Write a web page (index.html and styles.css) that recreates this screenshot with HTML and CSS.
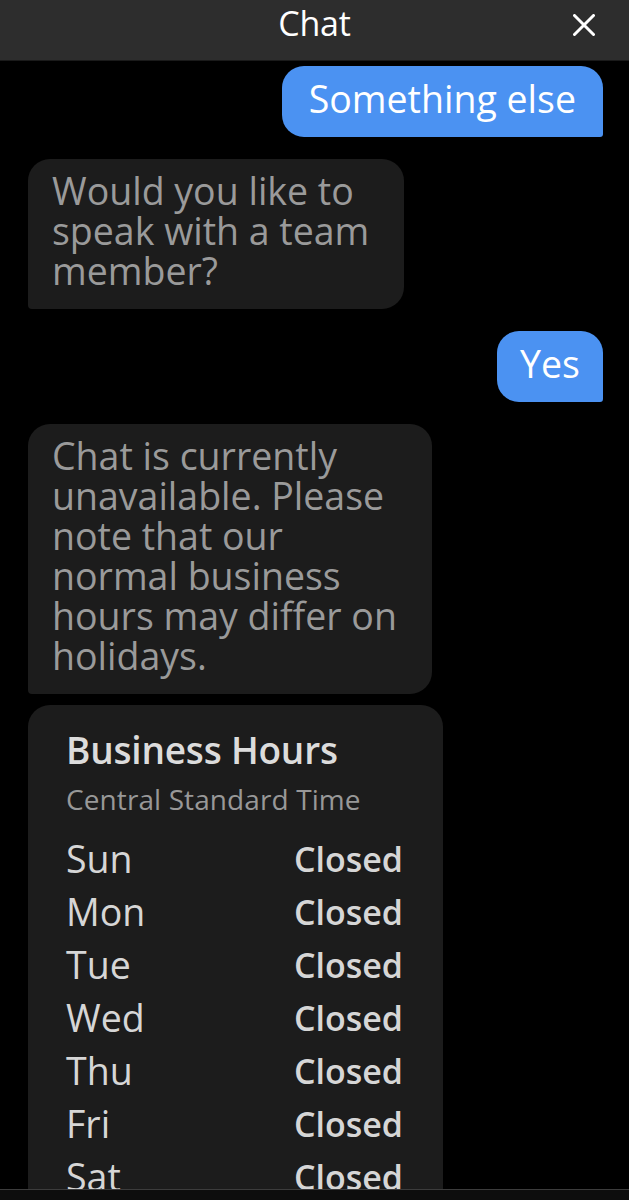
FILE: index.html
```html
<!DOCTYPE html>
<html>
<head>
<meta charset="utf-8">
<link rel="stylesheet" href="styles.css">
</head>
<body>
<div class="app">
  <header class="header">
    <div class="title">Chat</div>
    <button class="close" aria-label="Close">
      <svg width="22" height="22" viewBox="0 0 22 22"><path d="M1.5 1.5 L20.5 20.5 M20.5 1.5 L1.5 20.5" stroke="#fff" stroke-width="3" stroke-linecap="round" fill="none"/></svg>
    </button>
  </header>
  <main class="messages">
    <div class="msg user">Something else</div>
    <div class="msg bot">Would you like to<br>speak with a team<br>member?</div>
    <div class="msg user short">Yes</div>
    <div class="msg bot">Chat is currently<br>unavailable. Please<br>note that our<br>normal business<br>hours may differ on<br>holidays.</div>
    <div class="card">
      <div class="card-title">Business Hours</div>
      <div class="card-sub">Central Standard Time</div>
      <div class="hours">
        <div class="row"><span class="day">Sun</span><span class="status">Closed</span></div>
        <div class="row"><span class="day">Mon</span><span class="status">Closed</span></div>
        <div class="row"><span class="day">Tue</span><span class="status">Closed</span></div>
        <div class="row"><span class="day">Wed</span><span class="status">Closed</span></div>
        <div class="row"><span class="day">Thu</span><span class="status">Closed</span></div>
        <div class="row"><span class="day">Fri</span><span class="status">Closed</span></div>
        <div class="row"><span class="day">Sat</span><span class="status">Closed</span></div>
      </div>
    </div>
  </main>
  <footer class="footer"></footer>
</div>
</body>
</html>
```
FILE: styles.css
```css
* { box-sizing: border-box; }
html, body { margin: 0; padding: 0; background: #000; }
body { font-family: "Open Sans", "Noto Sans", sans-serif; }
.app { width: 629px; height: 1200px; display: flex; flex-direction: column; overflow: hidden; }
.header {
  height: 61px; flex: none; background: #2d2d2d; border-bottom: 1px solid #1a1a1a;
  display: flex; align-items: center; justify-content: center; position: relative;
}
.title { color: #fff; font-size: 34px; line-height: 40px; margin-top: -14px; letter-spacing: -0.2px; }
.close {
  position: absolute; right: 34px; top: 14px; width: 22px; height: 22px;
  background: none; border: 0; padding: 0; display: block;
}
.close svg { display: block; }
.messages {
  flex: 1; overflow: hidden; display: flex; flex-direction: column;
  padding: 5px 26px 0 28px; gap: 22px;
}
.msg { font-size: 37.5px; line-height: 40px; padding: 12px 26px 18px; width: fit-content; white-space: nowrap; }
.user {
  align-self: flex-end; background: #4b92f2; color: #fff;
  border-radius: 22px 22px 3px 22px; padding: 12.5px 27px 18.5px;
}
.user.short { padding-left: 23px; padding-right: 23px; }
.bot {
  align-self: flex-start; background: #1c1c1c; color: #9a9a9a;
  border-radius: 22px 22px 22px 4px; padding-left: 24px; padding-right: 35px;
}
.card {
  margin-top: -11px; width: 415px; flex: none; background: #1c1c1c;
  border-radius: 22px 22px 0 0; padding: 22px 40px 0 38px;
}
.card-title { color: #dcdcdc; font-weight: 600; font-size: 37px; line-height: 46px; letter-spacing: -0.2px; }
.card-sub { color: #989898; font-size: 28px; line-height: 34px; margin-top: 9px; letter-spacing: 0.1px; }
.hours { margin-top: 16px; display: flex; flex-direction: column; }
.row { display: flex; justify-content: space-between; height: 53px; align-items: center; color: #d6d6d6; }
.day { font-size: 37.5px; }
.status { font-weight: 600; font-size: 34px; }
.footer { height: 11px; flex: none; background: #0d0d0d; border-top: 1px solid #3c3c3c; }
```
